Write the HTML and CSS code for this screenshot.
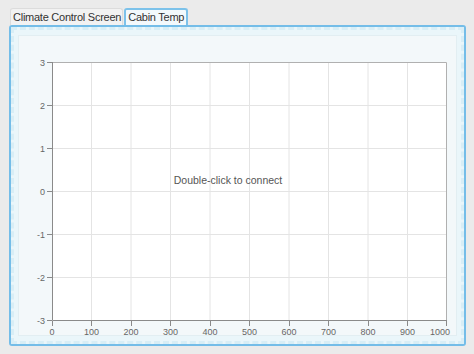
FILE: index.html
```html
<!DOCTYPE html>
<html lang="en">
<head>
  <meta charset="UTF-8" />
  <title>Climate Control Screen</title>
  <link rel="stylesheet" href="styles.css">
</head>
<body>

<div class="screen">
  <!-- Tabs -->
  <div class="tabs">
    <div class="tab">Climate Control Screen</div>
    <div class="tab active">Cabin Temp</div>
  </div>

  <!-- Panel -->
  <div class="panel">
    <div class="panel-dash">
      <div class="panel-body">
        <svg class="chart" width="439" height="301" viewBox="19 34 439 301">
          <rect class="plot" x="53" y="61" width="395" height="259" />
          <g class="grid">
            <line x1="92.5" y1="61" x2="92.5" y2="320" />
            <line x1="132" y1="61" x2="132" y2="320" />
            <line x1="171.5" y1="61" x2="171.5" y2="320" />
            <line x1="211" y1="61" x2="211" y2="320" />
            <line x1="250.5" y1="61" x2="250.5" y2="320" />
            <line x1="290" y1="61" x2="290" y2="320" />
            <line x1="329.5" y1="61" x2="329.5" y2="320" />
            <line x1="369" y1="61" x2="369" y2="320" />
            <line x1="408.5" y1="61" x2="408.5" y2="320" />
            <line x1="53" y1="104.5" x2="448" y2="104.5" />
            <line x1="53" y1="147.5" x2="448" y2="147.5" />
            <line x1="53" y1="190.5" x2="448" y2="190.5" />
            <line x1="53" y1="233.5" x2="448" y2="233.5" />
            <line x1="53" y1="276.5" x2="448" y2="276.5" />
          </g>
          <path class="frame" d="M53.5 61.5 H447.5 V319.5" />
          <path class="axis" d="M53.5 61 V319.5 H448" />
          <g class="ticks">
            <path d="M48 61.5 H53 M48 104.5 H53 M48 147.5 H53 M48 190.5 H53 M48 233.5 H53 M48 276.5 H53 M48 319.5 H53" />
            <path d="M53.5 320 V325 M92.5 320 V325 M132.5 320 V325 M171.5 320 V325 M211.5 320 V325 M250.5 320 V325 M290.5 320 V325 M329.5 320 V325 M369.5 320 V325 M408.5 320 V325 M447.5 320 V325" />
          </g>
          <g class="ylabels">
            <text x="46" y="64.5">3</text>
            <text x="46" y="107.5">2</text>
            <text x="46" y="150.5">1</text>
            <text x="46" y="193.5">0</text>
            <text x="46" y="236.5">-1</text>
            <text x="46" y="279.5">-2</text>
            <text x="46" y="322.5">-3</text>
          </g>
          <g class="xlabels">
            <text x="53" y="334">0</text>
            <text x="92.5" y="334">100</text>
            <text x="132" y="334">200</text>
            <text x="171.5" y="334">300</text>
            <text x="211" y="334">400</text>
            <text x="250.5" y="334">500</text>
            <text x="290" y="334">600</text>
            <text x="329.5" y="334">700</text>
            <text x="369" y="334">800</text>
            <text x="408.5" y="334">900</text>
            <text x="441" y="334">1000</text>
          </g>
          <text class="message" x="229" y="183">Double-click to connect</text>
        </svg>
      </div>
    </div>
  </div>
</div>

</body>
</html>
```

FILE: styles.css
```css
body {
  margin: 0;
  background-color: #ebebeb;
  font-family: 'Liberation Sans', Arial, sans-serif;
  color: #333;
}
.screen {
  padding: 8px 0 0 9px;
}
.tabs {
  display: flex;
  padding-left: 1px;
  height: 17px;
}
.tab {
  font-size: 11px;
  letter-spacing: -0.25px;
  line-height: 16px;
  padding: 0 1px 0 2px;
  color: #333;
  background: #f2f2f2;
  border: 1px solid #dcdcdc;
  border-bottom: none;
  border-radius: 3px 3px 0 0;
}
.tab.active {
  margin-left: 1px;
  padding: 0 2px;
  background: #f3f9fc;
  border: 2px solid #7cc2ea;
  border-bottom: none;
  line-height: 15px;
}
.panel {
  width: 453px;
  height: 317px;
  border: 2px solid #74bde8;
  border-radius: 3px;
  background: #eaf6fa;
}
.panel-dash {
  height: 100%;
  box-sizing: border-box;
  border: 3px dashed #d8eef6;
  padding: 5px;
}
.panel-body {
  height: 301px;
  width: 439px;
  margin: 0 -1px;
  background: #f3f8fa;
  border: 1px solid #e2eef2;
  box-sizing: border-box;
  overflow: hidden;
}
.chart {
  display: block;
  margin: -1px;
}
.chart .plot {
  fill: #fff;
}
.chart .grid line {
  stroke: #e4e4e4;
  stroke-width: 1;
}
.chart .frame {
  fill: none;
  stroke: #b0b0b0;
}
.chart .axis {
  fill: none;
  stroke: #8a8a8a;
}
.chart .ticks path {
  stroke: #8a8a8a;
  fill: none;
}
.chart text {
  font-family: 'Liberation Sans', Arial, sans-serif;
  font-size: 9px;
  fill: #666;
}
.chart .ylabels text {
  text-anchor: end;
}
.chart .xlabels text {
  text-anchor: middle;
}
.chart .message {
  font-size: 10.5px;
  fill: #555;
  text-anchor: middle;
}
```
